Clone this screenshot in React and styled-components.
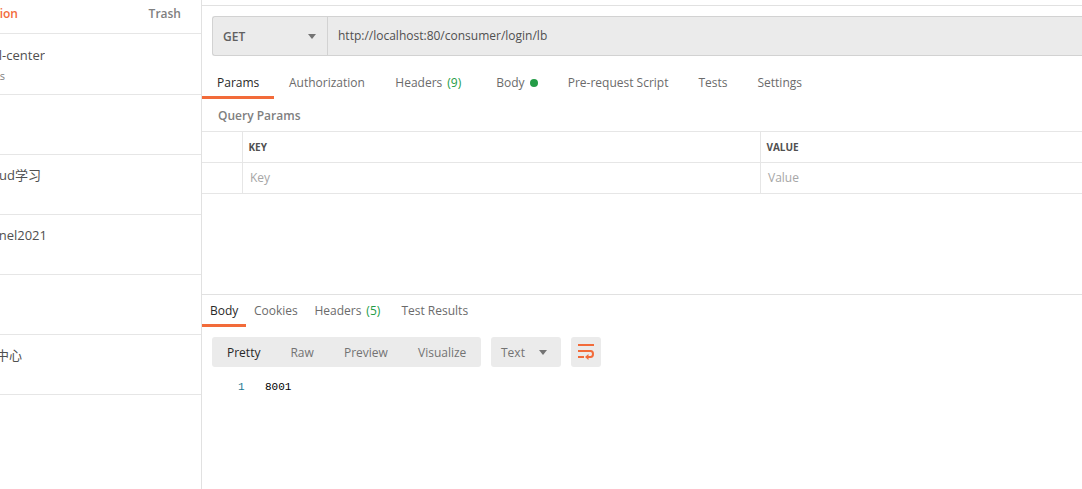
import React from "react";
import styled, { createGlobalStyle } from "styled-components";

const Global = createGlobalStyle`
  * { box-sizing: border-box; }
  body { margin: 0; background: #fff; overflow: hidden; }
`;

const Shell = styled.div`
  display: flex;
  width: 100%;
  height: 489px;
  overflow: hidden;
  font: 12px/18px "Open Sans", "Noto Sans CJK SC", sans-serif;
  color: #6b6b6b;
`;

const Sidebar = styled.aside`
  width: 202px;
  flex: none;
  border-right: 1px solid #e1e1e1;
`;

const SidebarActions = styled.div`
  display: flex;
  justify-content: space-between;
  height: 34px;
  padding: 5px 20px 0 0;
  border-bottom: 1px solid #e6e6e6;
  font-weight: 600;
`;

const Clip = styled.div`
  display: flex;
  justify-content: flex-end;
  width: ${(p) => p.$w}px;
  overflow: hidden;
  white-space: nowrap;
`;

const NewCollection = styled(Clip)`
  color: #f26b3a;
`;

const Trash = styled.span`
  color: #808080;
`;

const Collection = styled.div`
  height: ${(p) => p.$h || 60}px;
  padding-top: ${(p) => p.$pt || 10}px;
  border-bottom: 1px solid #e6e6e6;
`;

const Name = styled(Clip)`
  font-size: 13px;
  line-height: 20px;
  color: #505050;
`;

const Count = styled(Clip)`
  font-size: 11px;
  line-height: 21px;
  color: #808080;
`;

const Main = styled.main`
  flex: 1;
  min-width: 0;
  display: flex;
  flex-direction: column;
`;

const Request = styled.section`
  height: 289px;
  margin-top: 5px;
  border-top: 1px solid #e1e1e1;
`;

const UrlBar = styled.div`
  display: flex;
  height: 40px;
  margin: 10px 0 0 10px;
  background: #ebebeb;
  border: 1px solid #d2d2d2;
  border-right: 0;
  border-radius: 3px 0 0 3px;
`;

const Method = styled.div`
  display: flex;
  align-items: center;
  justify-content: space-between;
  width: 115px;
  padding: 1px 11px 0 10px;
  border-right: 1px solid #d2d2d2;
  font-weight: 600;
  color: #606060;
`;

const Caret = styled.i`
  border: 4px solid transparent;
  border-top: 5px solid #737373;
  border-bottom: 0;
`;

const Url = styled.div`
  padding: 10px 0 0 10px;
  color: #505050;
`;

const Tabs = styled.nav`
  display: flex;
  height: ${(p) => p.$h}px;
`;

const Tab = styled.div`
  display: flex;
  width: ${(p) => p.$w}px;
  padding: ${(p) => p.$pad};
  white-space: nowrap;
  color: ${(p) => (p.$active ? "#282828" : "#6b6b6b")};
  border-bottom: 3px solid ${(p) => (p.$active ? "#f26b3a" : "transparent")};
`;

const Total = styled.span`
  margin-left: 5px;
  color: #249c47;
`;

const Dot = styled.i`
  width: 8px;
  height: 8px;
  margin: 5px 0 0 5px;
  border-radius: 50%;
  background: #249c47;
`;

const SectionTitle = styled.div`
  height: 32px;
  padding: 8px 0 0 16px;
  font-weight: 600;
  color: #808080;
`;

const Row = styled.div`
  display: grid;
  grid-template-columns: 40px 518px 1fr;
  height: 31px;
  border-top: 1px solid #e6e6e6;
  &:last-child { height: 32px; border-bottom: 1px solid #e6e6e6; }
`;

const Cell = styled.div`
  padding: 6px 0 0 7px;
  color: #a6a6a6;
  & + & { border-left: 1px solid #e6e6e6; }
`;

const HeadCell = styled(Cell)`
  padding-left: 5.4px;
  font-size: 10px;
  font-weight: 700;
  color: #505050;
`;

const Response = styled.section`
  flex: 1;
  border-top: 1px solid #e1e1e1;
`;

const Toolbar = styled.div`
  display: flex;
  gap: 10px;
  padding: 10px 0 0 10px;
`;

const Group = styled.div`
  display: flex;
  align-items: center;
  width: ${(p) => p.$w}px;
  height: 30px;
  padding-left: ${(p) => p.$pl}px;
  background: #ebebeb;
  border-radius: 3px;
  color: #808080;
`;

const Mode = styled.span`
  width: ${(p) => p.$w}px;
  margin-top: 1px;
  color: ${(p) => (p.$active ? "#282828" : "#737373")};
`;

const Code = styled.div`
  display: flex;
  padding: 11px 0 0 36px;
  font: 11px/18px "Liberation Mono", monospace;
  color: #000;
`;

const LineNumber = styled.span`
  width: 27px;
  color: #237893;
`;

const requestTabs = [
  { label: "Params", w: 72, active: true },
  { label: "Authorization", w: 106.3 },
  { label: "Headers", w: 101, total: 9 },
  { label: "Body", w: 71.4, dot: true },
  { label: "Pre-request Script", w: 130.8 },
  { label: "Tests", w: 59 },
  { label: "Settings", w: 80 },
];

const responseTabs = [
  { label: "Body", w: 44, active: true },
  { label: "Cookies", w: 60.4 },
  { label: "Headers", w: 87, total: 5 },
  { label: "Test Results", w: 90 },
];

function TabStrip({ tabs, height, pad }) {
  return (
    <Tabs $h={height}>
      {tabs.map((t) => (
        <Tab key={t.label} $w={t.w} $pad={pad} $active={t.active}>
          {t.label}
          {t.total && <Total>({t.total})</Total>}
          {t.dot && <Dot />}
        </Tab>
      ))}
    </Tabs>
  );
}

function WrapIcon() {
  return (
    <svg width="16" height="16" viewBox="0 0 16 16" fill="none" stroke="#f26b3a" strokeWidth="2">
      <path d="M0 1h16M0 7h12.5a2.5 3 0 0 1 0 6H9M0 13h6" />
      <path d="M7 13l3.5-3v6z" fill="#f26b3a" stroke="none" />
    </svg>
  );
}

export default function App() {
  return (
    <Shell>
      <Global />
      <Sidebar>
        <SidebarActions>
          <NewCollection $w={18}>tion</NewCollection>
          <Trash>Trash</Trash>
        </SidebarActions>
        <Collection $h={61} $pt={11}>
          <Name $w={45}>l-center</Name>
          <Count $w={5}>s</Count>
        </Collection>
        <Collection />
        <Collection><Name $w={41}>ud学习</Name></Collection>
        <Collection><Name $w={47}>nel2021</Name></Collection>
        <Collection />
        <Collection><Name $w={22}>中心</Name></Collection>
      </Sidebar>
      <Main>
        <Request>
          <UrlBar>
            <Method>GET<Caret /></Method>
            <Url>http://localhost:80/consumer/login/lb</Url>
          </UrlBar>
          <TabStrip tabs={requestTabs} height={43} pad="18px 0 0 15px" />
          <SectionTitle>Query Params</SectionTitle>
          <div>
            <Row>
              <HeadCell />
              <HeadCell>KEY</HeadCell>
              <HeadCell>VALUE</HeadCell>
            </Row>
            <Row>
              <Cell />
              <Cell>Key</Cell>
              <Cell>Value</Cell>
            </Row>
          </div>
        </Request>
        <Response>
          <TabStrip tabs={responseTabs} height={32} pad="7px 0 0 8px" />
          <Toolbar>
            <Group $w={269} $pl={15}>
              <Mode $w={63.4} $active>Pretty</Mode>
              <Mode $w={53.6}>Raw</Mode>
              <Mode $w={74}>Preview</Mode>
              <Mode $w={60}>Visualize</Mode>
            </Group>
            <Group $w={70} $pl={10}>
              <Mode $w={38}>Text</Mode>
              <Caret />
            </Group>
            <Group $w={30} $pl={7}><WrapIcon /></Group>
          </Toolbar>
          <Code><LineNumber>1</LineNumber>8001</Code>
        </Response>
      </Main>
    </Shell>
  );
}
